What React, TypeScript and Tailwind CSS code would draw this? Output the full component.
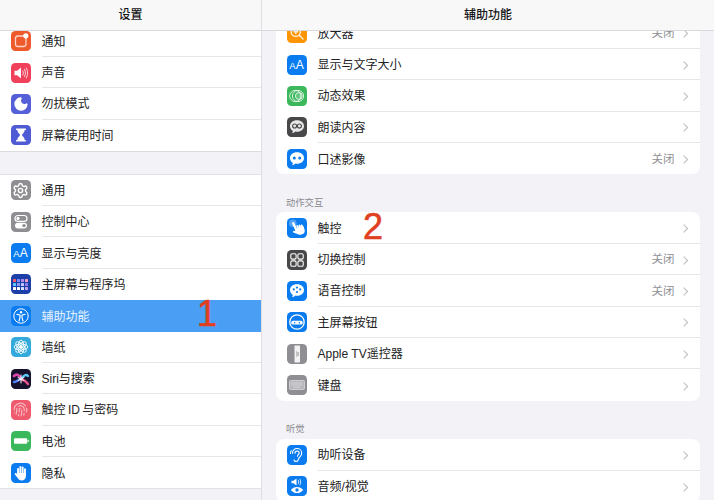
import type { ReactNode } from "react";
import { Fingerprint, Moon, Settings } from "lucide-react";

type Item = {
  label: string;
  bg: string;
  icon: ReactNode;
  value?: string;
  selected?: boolean;
};

const Bell = (
  <svg viewBox="0 0 20 20" className="w-5 h-5">
    <rect x="4.5" y="5" width="10.5" height="10.5" rx="2.5" fill="none" stroke="#fff" strokeOpacity=".75" strokeWidth="1.3" />
    <circle cx="14.8" cy="4.8" r="2.6" fill="#fff" />
  </svg>
);

const Speaker = (
  <svg viewBox="0 0 20 20" className="w-5 h-5">
    <path d="M3.5 7.8h2.7L10 4.6v10.8l-3.800-3.200H3.500z" fill="#fff" />
    <path d="M11.800 7.800c.7 1.300.7 3.100 0 4.400M13.500 6.300c1.300 2.200 1.300 5.200 0 7.400M15.200 4.900c1.900 3 1.900 7.200 0 10.200" fill="none" stroke="#fff" strokeOpacity=".85" strokeWidth=".9" strokeLinecap="round" />
  </svg>
);

const Hourglass = (
  <svg viewBox="0 0 20 20" className="w-5 h-5" fill="#fff">
    <rect x="5" y="3.500" width="10" height="1.600" rx=".5" />
    <rect x="5" y="14.900" width="10" height="1.600" rx=".5" />
    <path d="M6.300 5h7.400c0 2.600-2.400 3.600-2.800 5 .4 1.400 2.800 2.400 2.800 5H6.300c0-2.600 2.400-3.600 2.800-5-.4-1.400-2.800-2.400-2.800-5z" />
  </svg>
);

const Toggles = (
  <svg viewBox="0 0 20 20" className="w-5 h-5">
    <rect x="4" y="3.500" width="12" height="5.800" rx="2.900" fill="none" stroke="#fff" strokeWidth="1.200" />
    <circle cx="7" cy="6.400" r="1.600" fill="#fff" />
    <rect x="4" y="10.700" width="12" height="5.800" rx="2.900" fill="#fff" />
    <circle cx="13" cy="13.600" r="1.700" fill="#8e8e93" />
  </svg>
);

const AA = (
  <span className="flex items-baseline leading-none text-white font-['Liberation_Sans',sans-serif]">
    <span className="text-[9.5px]">A</span>
    <span className="text-[12px]">A</span>
  </span>
);

const HomeGrid = () => {
  const colors = ["#f05a6a", "#7a8cf5", "#b18af0", "#f0a0c0", "#5ac8fa", "#8a9cf5", "#c0c8ff", "#8f7ff0", "#fff", "#fff", "#d8e0ff", "#c0a0f0"];
  return (
    <div className="grid grid-cols-4 gap-[1.6px]">
      {colors.map((c, i) => (
        <span key={i} className="w-[2.4px] h-[2.4px] rounded-[0.6px]" style={{ background: c }} />
      ))}
    </div>
  );
};

const Access = (
  <svg viewBox="0 0 20 20" className="w-5 h-5" fill="none" stroke="#fff">
    <circle cx="10" cy="10" r="7.200" strokeWidth="1" />
    <circle cx="10" cy="6.300" r="1.200" fill="#fff" stroke="none" />
    <path d="M6 8.300l3 .7v2.600L8 15M14 8.300l-3 .7v2.600l1 3.400" strokeWidth="1.200" strokeLinecap="round" strokeLinejoin="round" />
  </svg>
);

const Flower = (
  <svg viewBox="0 0 20 20" className="w-5 h-5" fill="none" stroke="#fff" strokeWidth=".9">
    {[0, 45, 90, 135].map((r) => (
      <ellipse key={r} cx="10" cy="10" rx="3" ry="6.800" transform={`rotate(${r} 10 10)`} />
    ))}
    <circle cx="10" cy="10" r="1.600" fill="#fff" />
  </svg>
);

const Siri = (
  <svg viewBox="0 0 20 20" className="w-5 h-5" fill="none" strokeLinecap="round">
    <path d="M10 10C8 6 6 4 3 7" stroke="#d946a8" strokeWidth="2.800" />
    <path d="M10 10c3-4 5-5 7-3" stroke="#5ac8fa" strokeWidth="2.400" />
    <path d="M10 10c-3 1-5 3-7 3" stroke="#4f7cf5" strokeWidth="2.400" />
    <path d="M10 10c3 1 5 2 7 5" stroke="#e8508a" strokeWidth="2.400" />
    <path d="M10 6v8M7 8.500l6 3M13 8.500l-6 3" stroke="#fff" strokeWidth="1" />
  </svg>
);

const Battery = (
  <svg viewBox="0 0 20 20" className="w-5 h-5" fill="#fff">
    <rect x="3" y="7.200" width="13.200" height="5.600" rx="1" />
    <rect x="16.600" y="8.800" width="1.200" height="2.400" rx=".4" fillOpacity=".8" />
  </svg>
);

const RaisedHand = (
  <svg viewBox="0 0 20 20" className="w-5 h-5" fill="#fff">
    <rect x="6.100" y="5" width="1.900" height="8" rx=".95" />
    <rect x="8.400" y="3" width="1.900" height="9" rx=".95" />
    <rect x="10.700" y="3.500" width="1.900" height="9" rx=".95" />
    <rect x="13" y="5.300" width="1.900" height="8" rx=".95" />
    <path d="M6.100 10h8.800v3.200c0 2.500-1.800 4.300-4.200 4.300-1.800 0-2.900-.8-3.800-2.200L3.900 11.500c-.5-.8 0-1.500.6-1.600.5-.1 1 .2 1.600 1z" />
  </svg>
);

const Magnifier = (
  <svg viewBox="0 0 20 20" className="w-5 h-5" fill="none" stroke="#fff" strokeOpacity=".85" strokeWidth="1.400">
    <circle cx="8.800" cy="8.800" r="4.600" />
    <path d="M12.300 12.300L16 16M7 8.800h3.600M8.800 7v3.600" strokeLinecap="round" />
  </svg>
);

const Motion = (
  <svg viewBox="0 0 20 20" className="w-5 h-5" fill="none" stroke="#fff" strokeOpacity=".8" strokeWidth="1">
    <circle cx="8.300" cy="10" r="5.600" />
    <circle cx="11" cy="10" r="5.600" />
    <circle cx="11.800" cy="10" r="3.400" fill="#fff" fillOpacity=".2" />
  </svg>
);

const bubble = "M10 3.200c4.300 0 7 2.600 7 5.800s-2.700 5.800-7 5.800c-.6 0-1.200-.1-1.800-.2-.8.9-2 1.600-3.300 1.700.5-.7.900-1.500 1-2.400C4 12.800 3 11.100 3 9c0-3.200 2.700-5.800 7-5.800z";

const Speak = (
  <svg viewBox="0 0 20 20" className="w-5 h-5">
    <path d={bubble} fill="#e8e8e8" />
    <circle cx="7.600" cy="9" r="2" fill="none" stroke="#48484a" strokeWidth="1.100" />
    <circle cx="12.400" cy="9" r="2" fill="none" stroke="#48484a" strokeWidth="1.100" />
  </svg>
);

const DotsBubble = (
  <svg viewBox="0 0 20 20" className="w-5 h-5">
    <path d={bubble} fill="#fff" />
    <circle cx="7.300" cy="9" r="1.500" fill="#0a7cf0" />
    <circle cx="12.700" cy="9" r="1.500" fill="#0a7cf0" />
  </svg>
);

const VoiceBubble = (
  <svg viewBox="0 0 20 20" className="w-5 h-5">
    <path d={bubble} fill="#fff" />
    <circle cx="6.800" cy="8.400" r="1.100" fill="#0a7cf0" />
    <circle cx="10" cy="6.600" r="1.100" fill="#0a7cf0" />
    <circle cx="13.200" cy="8.400" r="1.100" fill="#0a7cf0" />
    <circle cx="10" cy="11" r="1.100" fill="#0a7cf0" />
  </svg>
);

const Touch = (
  <svg viewBox="0 0 20 20" className="w-5 h-5">
    <circle cx="5.800" cy="5.200" r="3.800" fill="#fff" fillOpacity=".3" />
    <g transform="rotate(-25 10 10)" fill="#fff">
      <rect x="7.400" y="3" width="2.300" height="10" rx="1.150" />
      <rect x="10" y="7.400" width="2" height="5" rx="1" />
      <rect x="12.200" y="7.900" width="2" height="5" rx="1" />
      <rect x="14.400" y="8.700" width="1.900" height="5" rx=".95" />
      <path d="M7.400 10.500h8.900V14c0 2.400-1.800 4-4.200 4-1.800 0-2.900-.7-3.800-2L4.700 12.600c-.6-.9.700-2 1.600-1.200l1.100 1z" />
    </g>
  </svg>
);

const Switch = (
  <svg viewBox="0 0 20 20" className="w-5 h-5" fill="none" stroke="#fff" strokeWidth="1.100">
    <rect x="3.800" y="3.800" width="5.300" height="5.300" rx="1.300" />
    <rect x="10.900" y="3.800" width="5.300" height="5.300" rx="1.300" />
    <rect x="3.800" y="10.900" width="5.300" height="5.300" rx="1.300" />
    <rect x="10.900" y="10.900" width="5.300" height="5.300" rx="1.300" />
  </svg>
);

const HomeButton = (
  <svg viewBox="0 0 20 20" className="w-5 h-5">
    <circle cx="10" cy="10" r="7.200" fill="none" stroke="#fff" strokeWidth="1.300" />
    <rect x="4.200" y="8.800" width="11.600" height="3.800" rx="1.900" fill="#fff" />
    <circle cx="7.600" cy="10.700" r=".8" fill="#0a7cf0" />
    <circle cx="12.400" cy="10.700" r=".8" fill="#0a7cf0" />
  </svg>
);

const Remote = (
  <svg viewBox="0 0 20 20" className="w-5 h-5">
    <rect x="7.500" y="1.500" width="5.500" height="17" rx=".8" fill="#f2f2f2" />
    <path d="M9 8h.9M9 10h.9M9 12h.9M11 8v4" stroke="#77777b" strokeWidth=".8" />
  </svg>
);

const Keyboard = (
  <svg viewBox="0 0 20 20" className="w-5 h-5">
    <rect x="2.500" y="5.500" width="15" height="9" rx="1" fill="#b8b8bc" stroke="#d8d8da" strokeWidth=".8" />
    <path d="M4.500 8h11M4.500 10h11M7 12.200h6" stroke="#e4e4e6" strokeWidth="1" strokeDasharray="1 .6" />
  </svg>
);

const Ear = (
  <svg viewBox="0 0 20 20" className="w-5 h-5" fill="none" stroke="#fff" strokeWidth="1.100" strokeLinecap="round">
    <path d="M5.500 8.200C5.500 5.400 7.500 3.500 10 3.500s4.700 1.900 4.700 4.700c0 3.300-2.900 3.800-3.300 6.200-.3 1.500-1.200 2.100-2.300 2.100-1 0-1.800-.6-2.100-1.500" />
    <path d="M8 8.200c0-1.300.9-2.200 2.100-2.200s2.100.9 2.100 2.100c0 1.500-1.700 1.700-1.700 3.100M3.500 8.500c0-1 .2-2 .7-2.800" />
  </svg>
);

const AudioVisual = (
  <svg viewBox="0 0 20 20" className="w-5 h-5">
    <path d="M4.500 4.700h2l3-2.300v7.200l-3-2.300h-2z" fill="#fff" />
    <path d="M11.300 4.200c.6.900.6 2.700 0 3.600M13 3.200c1 1.500 1 4.100 0 5.600" fill="none" stroke="#fff" strokeWidth=".8" strokeLinecap="round" />
    <path d="M3.800 14c1.500-2.100 3.700-3.100 6.200-3.100s4.700 1 6.200 3.100c-1.500 2.100-3.700 3.100-6.200 3.100S5.300 16.100 3.800 14z" fill="#fff" />
    <circle cx="10" cy="14" r="1.700" fill="#0a7cf0" />
  </svg>
);

const sidebarTop: Item[] = [
  { label: "通知", bg: "bg-[#ee5a2b]", icon: Bell },
  { label: "声音", bg: "bg-[#f0405a]", icon: Speaker },
  { label: "勿扰模式", bg: "bg-[#5560d8]", icon: <Moon className="w-4 h-4 text-white" fill="#fff" /> },
  { label: "屏幕使用时间", bg: "bg-[#4f5bd5]", icon: Hourglass },
];

const sidebarMain: Item[] = [
  { label: "通用", bg: "bg-[#8e8e93]", icon: <Settings className="w-[17px] h-[17px] text-white" /> },
  { label: "控制中心", bg: "bg-[#8e8e93]", icon: Toggles },
  { label: "显示与亮度", bg: "bg-[#0a7cf0]", icon: AA },
  { label: "主屏幕与程序坞", bg: "bg-[#1c3fa8]", icon: <HomeGrid /> },
  { label: "辅助功能", bg: "bg-[#0a7cf0]", icon: Access, selected: true },
  { label: "墙纸", bg: "bg-[#34aadc]", icon: Flower },
  { label: "Siri与搜索", bg: "bg-[#16122e]", icon: Siri },
  { label: "触控\u2009ID\u2009与密码", bg: "bg-[#ef5a6c]", icon: <Fingerprint className="w-[15px] h-[15px] text-white" strokeOpacity={0.55} /> },
  { label: "电池", bg: "bg-[#3cb85c]", icon: Battery },
  { label: "隐私", bg: "bg-[#0a7cf0]", icon: RaisedHand },
];

const vision: Item[] = [
  { label: "放大器", bg: "bg-[#ff9500]", icon: Magnifier, value: "关闭" },
  { label: "显示与文字大小", bg: "bg-[#0a7cf0]", icon: AA },
  { label: "动态效果", bg: "bg-[#3cb85c]", icon: Motion },
  { label: "朗读内容", bg: "bg-[#48484a]", icon: Speak },
  { label: "口述影像", bg: "bg-[#0a7cf0]", icon: DotsBubble, value: "关闭" },
];

const interaction: Item[] = [
  { label: "触控", bg: "bg-[#0a7cf0]", icon: Touch },
  { label: "切换控制", bg: "bg-[#48484a]", icon: Switch, value: "关闭" },
  { label: "语音控制", bg: "bg-[#0a7cf0]", icon: VoiceBubble, value: "关闭" },
  { label: "主屏幕按钮", bg: "bg-[#0a7cf0]", icon: HomeButton },
  { label: "Apple TV遥控器", bg: "bg-[#8e8e93]", icon: Remote },
  { label: "键盘", bg: "bg-[#8e8e93]", icon: Keyboard },
];

const hearing: Item[] = [
  { label: "助听设备", bg: "bg-[#0a7cf0]", icon: Ear },
  { label: "音频/视觉", bg: "bg-[#0a7cf0]", icon: AudioVisual },
];

function Chevron() {
  return (
    <svg viewBox="0 0 6 10" className="w-[5.5px] h-[9px] shrink-0" fill="none" stroke="#c2c2c6" strokeWidth="1.200" strokeLinecap="round" strokeLinejoin="round">
      <path d="M1 1l4 4-4 4" />
    </svg>
  );
}

function Row({ item, last, chevron }: { item: Item; last: boolean; chevron?: boolean }) {
  return (
    <div className={`flex items-center h-[31.4px] pl-[10.5px] ${item.selected ? "bg-[#4a9ff5]" : ""}`}>
      <div className={`w-5 h-5 shrink-0 rounded-[4.5px] flex items-center justify-center overflow-hidden ${item.bg}`}>
        {item.icon}
      </div>
      <div
        className={`ml-[11px] flex-1 h-full flex items-center pt-[2px] pr-3 ${
          last || item.selected ? "" : "border-b border-[#e6e6ea]"
        }`}
      >
        <span className={`text-[12px] ${item.selected ? "text-[#e8f3ff]" : "text-[#222224]"}`}>{item.label}</span>
        {chevron && (
          <div className="ml-auto flex items-center gap-[8px]">
            {item.value && <span className="text-[11.5px] text-[#909094]">{item.value}</span>}
            <Chevron />
          </div>
        )}
      </div>
    </div>
  );
}

function Group({ items, chevron, className }: { items: Item[]; chevron?: boolean; className: string }) {
  return (
    <div className={`bg-white ${className}`}>
      {items.map((item, i) => (
        <Row
          key={item.label}
          item={item}
          chevron={chevron}
          last={i === items.length - 1 || !!items[i + 1].selected}
        />
      ))}
    </div>
  );
}

function Header({ title }: { title: string }) {
  return (
    <div className="relative z-10 h-[30.5px] shrink-0 flex items-center justify-center bg-[#f8f8f8] border-b border-[#d9d9dd]">
      <span className="text-[12px] font-medium text-[#161618]">{title}</span>
    </div>
  );
}

function SectionLabel({ children }: { children: string }) {
  return <div className="h-[38px] pl-[10px] pb-[2px] flex items-end text-[9.3px] text-[#8a8a8e]">{children}</div>;
}

export default function App() {
  return (
    <div className="w-[714px] h-[500px] overflow-hidden flex bg-[#f2f2f7] font-['Liberation_Sans','Noto_Sans_CJK_SC',sans-serif]">
      <div className="relative w-[262px] shrink-0 flex flex-col border-r border-[#dedee2] overflow-hidden">
        <Header title="设置" />
        <div className="-mt-[5px]">
          <Group items={sidebarTop} className="border-b border-[#dcdce0]" />
          <Group items={sidebarMain} className="mt-[21.5px] border-y border-[#e2e2e6]" />
        </div>
        <span className="absolute left-[197px] top-[292px] text-[36px] leading-[44px] text-[#e0401f] [-webkit-text-stroke:0.6px_#e0401f]">1</span>
      </div>

      <div className="relative flex-1 flex flex-col overflow-hidden">
        <Header title="辅助功能" />
        <div className="-mt-[13px] px-[14px]">
          <Group items={vision} chevron className="rounded-b-[8px] overflow-hidden" />
          <SectionLabel>动作交互</SectionLabel>
          <Group items={interaction} chevron className="rounded-[8px] overflow-hidden" />
          <SectionLabel>听觉</SectionLabel>
          <Group items={hearing} chevron className="mt-[0.5px] rounded-[8px] overflow-hidden" />
        </div>
        <span className="absolute left-[101px] top-[205px] text-[36px] leading-[44px] text-[#e0401f] [-webkit-text-stroke:0.6px_#e0401f]">2</span>
      </div>
    </div>
  );
}
